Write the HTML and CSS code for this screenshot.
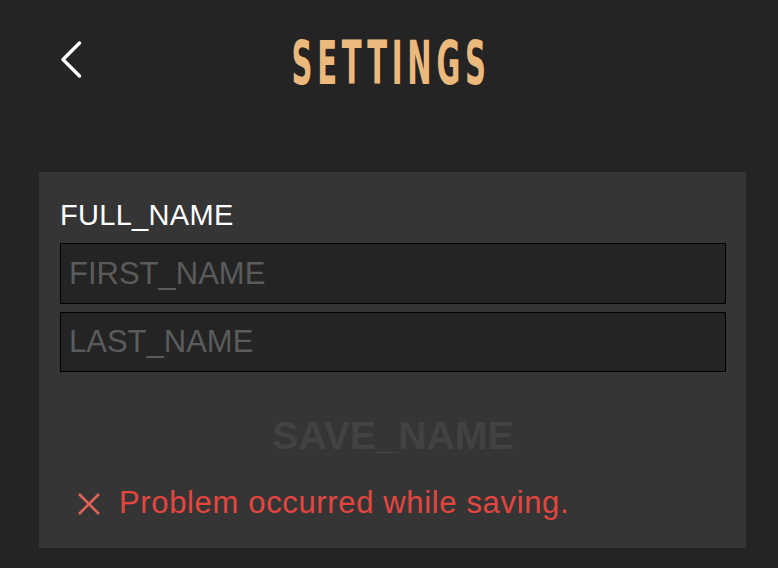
FILE: index.html
```html
<!DOCTYPE html>
<html lang="en">
<head>
<meta charset="utf-8">
<title>Settings</title>
<link rel="stylesheet" href="styles.css">
</head>
<body>
<div class="screen">
  <header class="topbar">
    <button class="back" aria-label="Back">
      <svg width="24" height="40" viewBox="0 0 24 40"><path d="M19.5 3 L3 19.5 L19.5 36" fill="none" stroke="#ffffff" stroke-width="3.4" stroke-linecap="round" stroke-linejoin="round"/></svg>
    </button>
    <h1 class="title"><span>SETTINGS</span></h1>
  </header>
  <section class="card">
    <label class="label">FULL_NAME</label>
    <div class="fields">
      <input class="field" type="text" placeholder="FIRST_NAME">
      <input class="field" type="text" placeholder="LAST_NAME">
    </div>
    <button class="save">SAVE_NAME</button>
    <div class="error">
      <svg class="error-icon" width="24" height="24" viewBox="0 0 24 24"><path d="M2 2 L22 22 M22 2 L2 22" stroke="#e2625b" stroke-width="2.6" fill="none"/></svg>
      <span>Problem occurred while saving.</span>
    </div>
  </section>
</div>
</body>
</html>
```
FILE: styles.css
```css
* { box-sizing: border-box; }
html, body { margin: 0; padding: 0; }
body {
  background: #242424;
  font-family: "Liberation Sans", Arial, Helvetica, sans-serif;
  width: 778px;
  height: 568px;
  overflow: hidden;
}
.screen {
  display: flex;
  flex-direction: column;
}
.topbar {
  height: 172px;
  display: flex;
  align-items: flex-start;
  position: relative;
}
.back {
  background: none;
  border: 0;
  padding: 0;
  margin: 40px 0 0 60px;
  width: 24px;
  height: 40px;
  display: flex;
}
.title {
  margin: 0;
  position: absolute;
  left: 0;
  right: 0;
  top: 28px;
  text-align: center;
  font-family: "Liberation Sans Narrow", "DejaVu Sans Condensed", "Liberation Sans", sans-serif;
  font-weight: 700;
  font-size: 61px;
  line-height: 70px;
  color: #ecb97c;
  pointer-events: none;
}
.title span {
  display: inline-block;
  transform: scaleX(0.53);
  letter-spacing: 9px;
  margin-right: -9px;
  margin-left: -4px;
}
.card {
  margin-left: 39px;
  width: 707px;
  height: 376px;
  background: #353535;
  padding: 26px 20px 0 21px;
  display: flex;
  flex-direction: column;
}
.label {
  color: #ffffff;
  font-size: 29px;
  line-height: 34px;
  letter-spacing: 0.3px;
  margin-bottom: 11px;
}
.fields {
  display: flex;
  flex-direction: column;
  gap: 8px;
}
.field {
  display: block;
  width: 666px;
  height: 61px;
  background: #242424;
  border: 1px solid #000000;
  border-radius: 0;
  padding: 0 8px;
  margin: 0;
  font-family: "Liberation Sans", Arial, sans-serif;
  font-size: 31px;
  color: #cccccc;
  outline: none;
}
.fields .field:last-child { height: 60px; }
.field::placeholder { color: #5b5b5b; opacity: 1; }
.save {
  align-self: center;
  margin-top: 42px;
  height: 44px;
  background: none;
  border: 0;
  padding: 0;
  font-family: "Liberation Sans", Arial, sans-serif;
  font-weight: 700;
  font-size: 39px;
  line-height: 44px;
  letter-spacing: 0.2px;
  color: #424242;
}
.error {
  margin-top: 27px;
  padding-left: 17px;
  display: flex;
  align-items: center;
  gap: 18px;
  color: #e4463f;
  font-size: 31px;
  line-height: 36px;
  letter-spacing: 0.65px;
}
.error-icon { flex: none; margin-top: 1px; }
```
